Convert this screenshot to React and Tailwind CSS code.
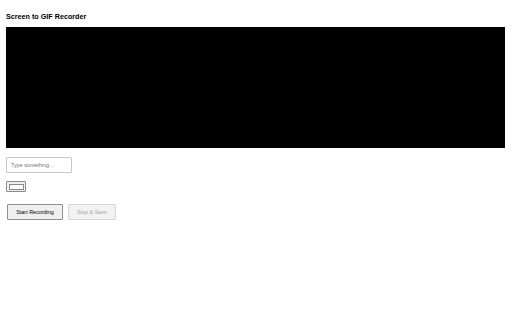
export default function App() {
  return (
    <div className="w-[512px] h-[320px] bg-white px-[6px] pt-[12px] font-['Liberation_Sans',Arial,sans-serif]">
      <h1 className="text-[7.2px] leading-[10px] font-bold text-black">Screen to GIF Recorder</h1>
      <div className="mt-[5px] w-[499px] h-[121px] bg-black"></div>
      <div className="mt-[9px] w-[66px] h-[16px] border border-[#c8c8c8] rounded-[1px] flex items-center px-[4px]">
        <span className="text-[5.4px] leading-[6px] text-[#757575]">Type something...</span>
      </div>
      <div className="mt-[8px] w-[20px] h-[11px] border border-[#8a8a8a] rounded-[1px] bg-[#efefef] p-[1.5px]">
        <div className="w-full h-full border border-[#8a8a8a] bg-white"></div>
      </div>
      <div className="mt-[12px] flex gap-[5px] pl-[1px]">
        <div className="w-[56px] h-[16px] border border-[#8f8f8f] rounded-[1px] bg-[#efefef] flex items-center justify-center text-[5.4px] leading-[6px] text-black">Start Recording</div>
        <div className="w-[48px] h-[16px] border border-[#d6d6d6] rounded-[1px] bg-[#f2f2f2] flex items-center justify-center text-[5.4px] leading-[6px] text-[#a8a8a8]">Stop &amp; Save</div>
      </div>
    </div>
  );
}
